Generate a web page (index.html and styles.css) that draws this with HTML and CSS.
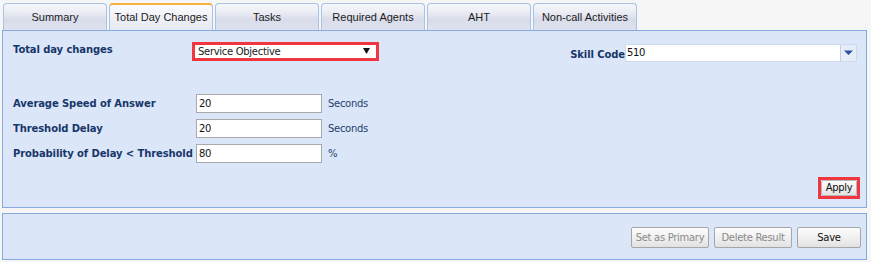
FILE: index.html
```html
<!DOCTYPE html>
<html>
<head>
<meta charset="utf-8">
<link rel="stylesheet" href="styles.css">
</head>
<body>
<div class="page">
  <div class="tabs">
    <div class="tab">Summary</div>
    <div class="tab active">Total Day Changes</div>
    <div class="tab">Tasks</div>
    <div class="tab">Required Agents</div>
    <div class="tab">AHT</div>
    <div class="tab">Non-call Activities</div>
  </div>
  <div class="panel main">
    <div class="top-row">
      <div class="label top-label">Total day changes</div>
      <div class="select highlight">
        <span class="select-text">Service Objective</span>
        <svg class="select-arrow" width="7" height="6" viewBox="0 0 7 6"><path d="M0 0H7L3.5 6Z" fill="#111"/></svg>
      </div>
      <div class="skill">
        <span class="label">Skill Code</span>
        <div class="combo">
          <span class="combo-text">510</span>
          <span class="combo-btn">
            <svg width="9" height="6" viewBox="0 0 9 6"><path d="M0 0.5H9L4.5 5Z" fill="#2b4f9e"/><path d="M0 0H9" stroke="#8aa3d3" stroke-width="1"/></svg>
          </span>
        </div>
      </div>
    </div>
    <div class="fields">
      <div class="label">Average Speed of Answer</div>
      <div class="input">20</div>
      <div class="unit">Seconds</div>
      <div class="label">Threshold Delay</div>
      <div class="input">20</div>
      <div class="unit">Seconds</div>
      <div class="label">Probability of Delay &lt; Threshold</div>
      <div class="input">80</div>
      <div class="unit">%</div>
    </div>
    <div class="apply-row">
      <div class="highlight apply-box"><button class="btn apply">Apply</button></div>
    </div>
  </div>
  <div class="panel footer">
    <button class="btn disabled wide">Set as Primary</button>
    <button class="btn disabled wide">Delete Result</button>
    <button class="btn save">Save</button>
  </div>
</div>
</body>
</html>
```
FILE: styles.css
```css
* { box-sizing: border-box; }
body {
  margin: 0;
  background: #f6f6f7;
  font-family: "DejaVu Sans", Verdana, sans-serif;
  font-size: 10px;
  letter-spacing: -0.3px;
  color: #111;
}
.page {
  padding: 3px 4px 0 2px;
}
.tabs {
  display: flex;
  gap: 2px;
  padding-left: 1px;
  height: 27px;
}
.tab {
  width: 104px;
  height: 27px;
  border: 1px solid #a9c3e8;
  border-bottom: none;
  border-radius: 4px 4px 0 0;
  background: linear-gradient(#f5f6fa 0%, #eceef5 30%, #d9dcea 60%, #dfe2ee 100%);
  text-align: center;
  line-height: 26px;
  color: #1c1c1c;
  font-family: "Liberation Sans", Arial, sans-serif;
  font-size: 11px;
  letter-spacing: 0;
}
.tab.active {
  border-top: 2px solid #f6b13d;
  line-height: 25px;
  background: linear-gradient(#fafbfd 0%, #f1f3f8 40%, #e6e9f1 100%);
}
.panel {
  border: 1px solid #86aadd;
  background: #dbe6f8;
}
.main {
  height: 178px;
  padding: 0 6px 0 10px;
  display: flex;
  flex-direction: column;
}
.label {
  font-weight: bold;
  color: #173669;
  line-height: 13px;
  white-space: nowrap;
  letter-spacing: -0.1px;
}
.top-row {
  display: flex;
  align-items: flex-start;
  margin-top: 11px;
}
.top-label {
  width: 179px;
  margin-top: 1px;
}
.highlight {
  border: 3px solid #f0363f;
}
.select {
  width: 187px;
  height: 19px;
  background: #fff;
  display: flex;
  align-items: center;
  padding: 0 6px 0 3px;
}
.select-text {
  flex: 1;
  line-height: 13px;
  color: #1b1b1b;
}
.select-arrow { margin-top: -2px; }
.skill {
  margin-left: auto;
  margin-top: 2px;
  margin-right: 3px;
  display: flex;
  align-items: center;
}
.skill .label { margin-top: 2px; }
.combo {
  width: 232px;
  height: 18px;
  background: #fff;
  border: 1px solid #cdd9ec;
  display: flex;
  align-items: stretch;
}
.combo-text {
  flex: 1;
  padding-left: 1px;
  line-height: 16px;
}
.combo-btn {
  width: 16px;
  border-left: 1px solid #c2cfe4;
  background: #e6edf9;
  display: flex;
  align-items: center;
  justify-content: center;
}
.fields {
  display: grid;
  grid-template-columns: 177px 126px auto;
  column-gap: 6px;
  row-gap: 6px;
  margin-top: 32px;
  align-items: center;
}
.input {
  height: 19px;
  background: #fff;
  border: 1px solid #a9a9a9;
  padding-left: 2px;
  line-height: 17px;
  color: #111;
}
.unit {
  color: #243f6c;
}
.apply-row {
  display: flex;
  justify-content: flex-end;
  margin-top: 14px;
}
.apply-box {
  width: 42px;
  height: 22px;
  display: flex;
}
.btn {
  font-family: "DejaVu Sans", Verdana, sans-serif;
  font-size: 10px;
  letter-spacing: -0.3px;
  border: 1px solid #a6a6a6;
  border-radius: 2px;
  background: linear-gradient(#fdfdfd, #f0f0f0 50%, #e2e2e2);
  color: #111;
  padding: 0;
  margin: 0;
}
.apply {
  width: 36px;
  height: 16px;
  line-height: 14px;
  border-color: #b8b8b8;
}
.footer {
  margin-top: 5px;
  height: 47px;
  display: flex;
  justify-content: flex-end;
  align-items: flex-start;
  gap: 5px;
  padding: 13px 5px 0 0;
}
.footer .btn {
  height: 21px;
}
.wide { width: 78px; }
.save { width: 64px; }
.disabled { color: #8a8a8a; }
```
